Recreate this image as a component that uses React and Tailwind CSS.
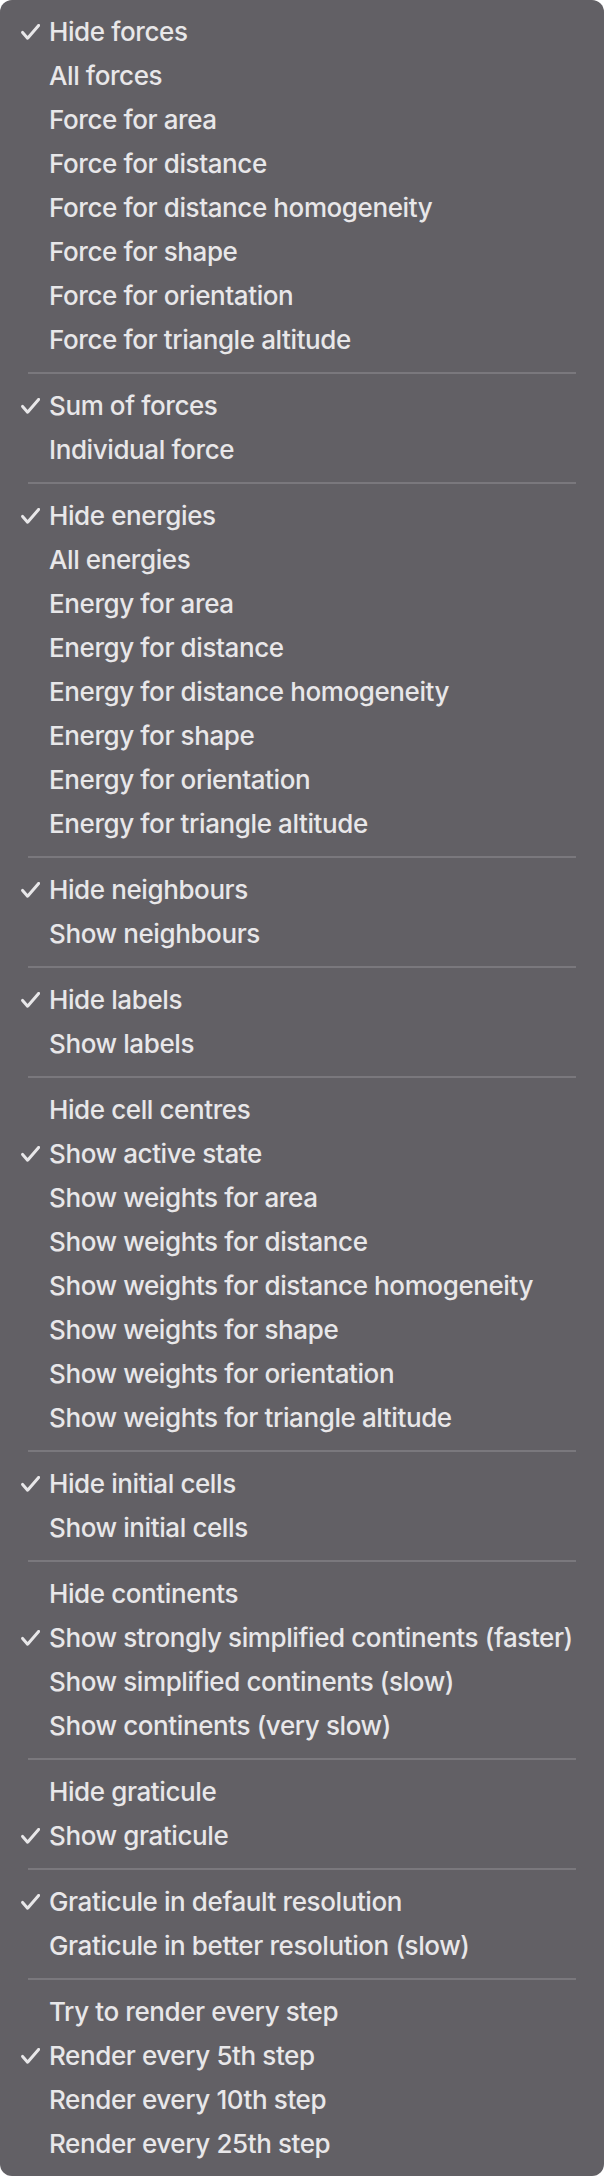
const groups = [
  [
    ['Hide forces', true],
    ['All forces'],
    ['Force for area'],
    ['Force for distance'],
    ['Force for distance homogeneity'],
    ['Force for shape'],
    ['Force for orientation'],
    ['Force for triangle altitude'],
  ],
  [['Sum of forces', true], ['Individual force']],
  [
    ['Hide energies', true],
    ['All energies'],
    ['Energy for area'],
    ['Energy for distance'],
    ['Energy for distance homogeneity'],
    ['Energy for shape'],
    ['Energy for orientation'],
    ['Energy for triangle altitude'],
  ],
  [['Hide neighbours', true], ['Show neighbours']],
  [['Hide labels', true], ['Show labels']],
  [
    ['Hide cell centres'],
    ['Show active state', true],
    ['Show weights for area'],
    ['Show weights for distance'],
    ['Show weights for distance homogeneity'],
    ['Show weights for shape'],
    ['Show weights for orientation'],
    ['Show weights for triangle altitude'],
  ],
  [['Hide initial cells', true], ['Show initial cells']],
  [
    ['Hide continents'],
    ['Show strongly simplified continents (faster)', true],
    ['Show simplified continents (slow)'],
    ['Show continents (very slow)'],
  ],
  [['Hide graticule'], ['Show graticule', true]],
  [['Graticule in default resolution', true], ['Graticule in better resolution (slow)']],
  [
    ['Try to render every step'],
    ['Render every 5th step', true],
    ['Render every 10th step'],
    ['Render every 25th step'],
  ],
];

function Check() {
  return (
    <svg width="19" height="16" viewBox="0 0 19 16" fill="none">
      <path
        d="M1.6 8.4 L6.6 14.2 L17.6 1.4"
        stroke="#e8e7e9"
        strokeWidth="3"
        strokeLinecap="round"
        strokeLinejoin="round"
      />
    </svg>
  );
}

function MenuItem({ label, checked }) {
  return (
    <div className="flex items-center h-[44px]">
      <div className="w-[49px] pl-[21px] flex items-center">
        {checked && <Check />}
      </div>
      <span className="whitespace-nowrap">{label}</span>
    </div>
  );
}

export default function App() {
  return (
    <div
      className="w-[604px] h-[2176px] bg-[#626065] rounded-[12px] py-[10px] text-[#e8e7e9] text-[26px] font-medium tracking-[-0.4px] leading-none"
      style={{ fontFamily: 'Inter, "Noto Sans", sans-serif' }}
    >
      {groups.map((group, gi) => (
        <div key={gi}>
          {gi > 0 && (
            <div className="h-[22px] flex items-center px-[28px]">
              <div className="h-[2px] w-full bg-[#7a787d]" />
            </div>
          )}
          {group.map(([label, checked]) => (
            <MenuItem key={label} label={label} checked={checked} />
          ))}
        </div>
      ))}
    </div>
  );
}
